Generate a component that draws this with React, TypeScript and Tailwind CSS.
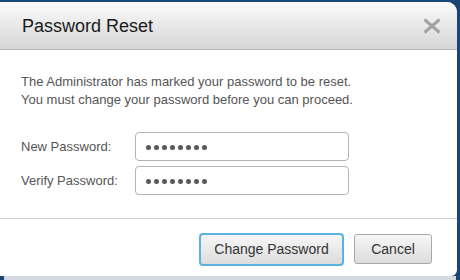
import React from "react";

function Dots() {
  return (
    <div className="flex items-center gap-[3px]">
      {[0, 1, 2, 3, 4, 5, 6, 7].map((i) => (
        <span key={i} className="block w-[5px] h-[5px] rounded-full bg-[#5a5a5a]" />
      ))}
    </div>
  );
}

export default function App() {
  return (
    <div
      className="w-[460px] h-[280px] bg-[#1b4577] overflow-hidden flex flex-col"
      style={{ fontFamily: '"Liberation Sans", Arial, sans-serif' }}
    >
      <div className="w-[457px] h-[274px] mt-[2px] bg-white rounded-tr-[10px] rounded-br-[6px] overflow-hidden flex flex-col shrink-0">
        <div className="h-[48px] shrink-0 border-b border-[#b9b9b9] bg-gradient-to-b from-[#fbfbfb] to-[#d6d6d6] flex items-center justify-between pl-[22px] pr-[15px]">
          <span className="text-[18px] leading-[24px] text-[#1a1a1a]">Password Reset</span>
          <svg width="20" height="16" viewBox="0 0 20 16" className="mt-[1px]">
            <path d="M2.5 1.5 L17.5 14.5 M17.5 1.5 L2.5 14.5" stroke="#a3a3a3" strokeWidth="3" strokeLinecap="butt" />
          </svg>
        </div>
        <div className="pt-[23px] pl-[21px] text-[13px] leading-[18px] text-[#555555]">
          <p>The Administrator has marked your password to be reset.</p>
          <p>You must change your password before you can proceed.</p>
          <div className="mt-[23px] flex flex-col gap-[5px]">
            <div className="flex items-center">
              <span className="w-[114px]">New Password:</span>
              <div className="w-[214px] h-[29px] border border-[#b3b3b3] rounded-[4px] bg-white flex items-center pl-[10px] pt-[1px]">
                <Dots />
              </div>
            </div>
            <div className="flex items-center">
              <span className="w-[114px]">Verify Password:</span>
              <div className="w-[214px] h-[29px] border border-[#b3b3b3] rounded-[4px] bg-white flex items-center pl-[10px] pt-[1px]">
                <Dots />
              </div>
            </div>
          </div>
        </div>
        <div className="mt-[23px] flex-1 border-t border-[#cfcfcf] flex items-start justify-end pt-[14px] pr-[25px] gap-[10px]">
          <button className="w-[145px] h-[33px] rounded-[4px] border-2 border-[#5ab3dc] bg-gradient-to-b from-[#f7f7f7] to-[#dcdcdc] text-[14px] text-[#333333] flex items-center justify-center">
            Change Password
          </button>
          <button className="mt-[1px] w-[78px] h-[30px] rounded-[3px] border border-[#a9a9a9] bg-gradient-to-b from-[#f7f7f7] to-[#dcdcdc] text-[14px] text-[#333333] flex items-center justify-center">
            Cancel
          </button>
        </div>
      </div>
      <div className="flex-1 w-[452px] ml-[4px] bg-[#d3d8e1]" />
    </div>
  );
}
